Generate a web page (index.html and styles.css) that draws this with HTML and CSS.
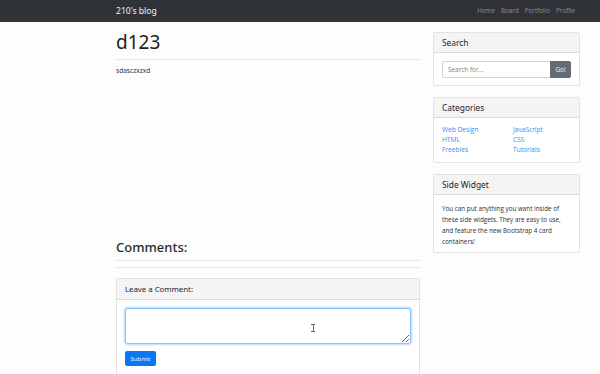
FILE: index.html
```html
<!DOCTYPE html>
<html lang="en">
<head>
    <meta charset="UTF-8">
    <meta name="viewport" content="width=device-width, initial-scale=1.0">
    <title>210's blog</title>
    <link rel="stylesheet" href="styles.css">
</head>
<body>
    <nav class="navbar">
        <div class="container nav-inner">
            <a class="brand" href="#">210's blog</a>
            <ul class="nav-links">
                <li><a href="#">Home</a></li>
                <li><a href="#">Board</a></li>
                <li><a href="#">Portfolio</a></li>
                <li><a href="#">Profile</a></li>
            </ul>
        </div>
    </nav>

    <div class="container page">
        <main class="post">
            <h1 class="post-title">d123</h1>
            <hr>
            <div class="post-body">
                <p>sdasczxzxd</p>
            </div>

            <h4 class="comments-title">Comments:</h4>
            <hr>
            <hr class="second">

            <div class="card comment-card">
                <h5 class="card-header">Leave a Comment:</h5>
                <div class="card-body">
                    <form>
                        <textarea class="comment-box"></textarea>
                        <span class="ibeam"></span>
                        <button type="submit" class="btn-submit">Submit</button>
                    </form>
                </div>
            </div>
        </main>

        <aside class="sidebar">
            <div class="card">
                <h5 class="card-header">Search</h5>
                <div class="card-body search-body">
                    <div class="search-group">
                        <input type="text" placeholder="Search for...">
                        <button type="button">Go!</button>
                    </div>
                </div>
            </div>

            <div class="card">
                <h5 class="card-header">Categories</h5>
                <div class="card-body cat-grid">
                    <ul>
                        <li><a href="#">Web Design</a></li>
                        <li><a href="#">HTML</a></li>
                        <li><a href="#">Freebies</a></li>
                    </ul>
                    <ul>
                        <li><a href="#">JavaScript</a></li>
                        <li><a href="#">CSS</a></li>
                        <li><a href="#">Tutorials</a></li>
                    </ul>
                </div>
            </div>

            <div class="card">
                <h5 class="card-header">Side Widget</h5>
                <div class="card-body widget-text">
                    You can put anything you want inside of these side widgets. They are easy to use, and feature the new Bootstrap 4 card containers!
                </div>
            </div>
        </aside>
    </div>
</body>
</html>
```

FILE: styles.css
```css
body {
    margin: 0;
    font-family: "Open Sans", "Noto Sans", sans-serif;
    font-size: 6.6px;
    line-height: 1.5;
    color: #2b2f33;
    background-color: #fdfdfd;
    overflow: hidden;
}

a {
    text-decoration: none;
    color: #3a8cf0;
}

ul {
    list-style: none;
    margin: 0;
    padding: 0;
}

h1, h4, h5 {
    font-family: "Noto Sans", "Open Sans", sans-serif;
    font-weight: 400;
}

.container {
    width: 464px;
    margin-left: 116px;
}

/* navbar */
.navbar {
    background-color: #2f3337;
    height: 22px;
}

.nav-inner {
    display: flex;
    justify-content: space-between;
    align-items: center;
    height: 22px;
}

.brand {
    color: #f2f2f2;
    font-family: "Noto Sans", sans-serif;
    font-size: 8.6px;
}

.nav-links {
    display: flex;
    padding-right: 2px;
}

.nav-links a {
    color: rgba(255, 255, 255, 0.45);
    font-size: 6.3px;
    padding: 0 3px;
}

/* layout */
.page {
    display: flex;
    gap: 13px;
}

.post {
    width: 304px;
    padding-top: 9px;
}

.sidebar {
    width: 147px;
    padding-top: 10px;
    display: flex;
    flex-direction: column;
    gap: 11px;
}

/* post */
.post-title {
    margin: 0 0 5px;
    font-size: 19px;
    line-height: 1.2;
    color: #1a1d20;
}

hr {
    margin: 0;
    border: 0;
    border-top: 1px solid rgba(0, 0, 0, 0.09);
}

.post-body {
    min-height: 174px;
    padding-top: 6px;
}

.post-body p {
    margin: 0;
}

.comments-title {
    margin: 0 0 5px;
    font-size: 13px;
    font-weight: 500;
    line-height: 1.2;
    color: #26292c;
}

hr.second {
    margin-top: 6px;
}

/* cards */
.card {
    background-color: #fff;
    border: 1px solid rgba(0, 0, 0, 0.11);
    border-radius: 2px;
}

.card-header {
    margin: 0;
    height: 19px;
    line-height: 19px;
    padding: 0 8px;
    font-size: 8.4px;
    color: #222528;
    background-color: #f4f4f4;
    border-bottom: 1px solid rgba(0, 0, 0, 0.1);
}

.card-body {
    padding: 8px;
}

.search-body {
    padding-bottom: 7px;
}

.search-group {
    display: flex;
    height: 17px;
}

.search-group input {
    flex: 1;
    min-width: 0;
    box-sizing: border-box;
    border: 1px solid #ced4da;
    border-right: none;
    border-radius: 2px 0 0 2px;
    padding: 0 5px;
    font-family: inherit;
    font-size: 6.4px;
    color: #495057;
}

.search-group input::placeholder {
    color: #7b8188;
}

.search-group button {
    width: 21px;
    border: none;
    border-radius: 0 2px 2px 0;
    background-color: #646b72;
    color: #f0f0f0;
    font-family: inherit;
    font-size: 6.4px;
    padding: 0;
}

.cat-grid {
    display: grid;
    grid-template-columns: 71px 1fr;
    line-height: 10px;
    padding: 7px 8px 7px;
}

.widget-text {
    font-size: 6.3px;
    line-height: 11px;
    padding: 8px 8px 5px;
}

/* comment form */
.comment-card {
    margin-top: 10px;
    height: 120px;
    border-radius: 2px 2px 0 0;
}

.comment-card .card-header {
    height: 20px;
    line-height: 20px;
    font-size: 7.8px;
}

.comment-card form {
    position: relative;
}

.comment-box {
    display: block;
    width: 100%;
    box-sizing: border-box;
    height: 36px;
    border: 1px solid #8cc2fb;
    border-radius: 3px;
    box-shadow: 0 0 0 1.5px rgba(0, 123, 255, 0.2);
    outline: none;
    resize: vertical;
    font-family: inherit;
}

.ibeam {
    position: absolute;
    left: 186px;
    top: 16px;
    width: 4px;
    height: 8px;
    border-top: 1px solid #666;
    border-bottom: 1px solid #666;
    box-sizing: border-box;
}

.ibeam::after {
    content: "";
    position: absolute;
    left: 1.5px;
    top: 0;
    width: 1px;
    height: 6px;
    background-color: #666;
}

.btn-submit {
    margin-top: 7px;
    width: 31px;
    height: 15px;
    padding: 0;
    border: none;
    border-radius: 2px;
    background-color: #0a78f5;
    color: #fff;
    font-family: inherit;
    font-size: 6px;
}
```
